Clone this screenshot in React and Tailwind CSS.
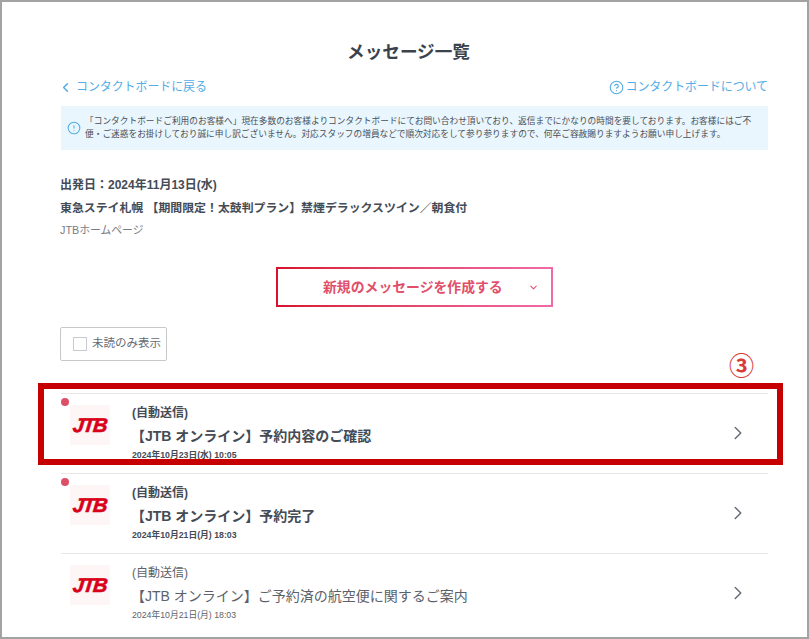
import { ChevronLeft, ChevronDown, ChevronRight, CircleHelp, Info } from 'lucide-react';

const mensajes = [
	{ titulo: '【JTB オンライン】予約内容のご確認', fecha: '2024年10月23日(水) 10:05', noLeido: true },
	{ titulo: '【JTB オンライン】予約完了', fecha: '2024年10月21日(月) 18:03', noLeido: true },
	{ titulo: '【JTB オンライン】ご予約済の航空便に関するご案内', fecha: '2024年10月21日(月) 18:03', noLeido: false },
];

function LogoJtb() {
	return (
		<div className="flex h-10 w-10 shrink-0 items-center justify-center bg-[#fdf5f6]">
			<span className="-skew-x-6 text-[20px] leading-none font-bold italic tracking-[-1.5px] text-[#d9001b] [-webkit-text-stroke:0.6px_#d9001b]">
				JTB
			</span>
		</div>
	);
}

function FilaMensaje({ titulo, fecha, noLeido }) {
	return (
		<div className="relative flex h-20 items-start border-t border-[#e8e8e8] pt-[11px] pl-[9px]">
			{noLeido && <span className="absolute top-[4px] left-0 h-2 w-2 rounded-full bg-[#dc5067]" />}
			<LogoJtb />
			<div className={`ml-[22px] flex-1 ${noLeido ? 'font-bold text-[#444b55]' : 'text-[#5c626a]'}`}>
				<p className="text-[12px] leading-[16px]">(自動送信)</p>
				<p className="mt-[5px] -ml-[1px] text-[14px] leading-[20px]">{titulo}</p>
				<p className="mt-[3px] text-[8.75px] leading-[12px]">{fecha}</p>
			</div>
			<ChevronRight className="mt-[17px] mr-[19px] h-[22px] w-[22px] text-[#666c75]" strokeWidth={1.6} />
		</div>
	);
}

export default function App() {
	return (
		<div
			className="relative h-[639px] w-[809px] overflow-hidden border-2 border-[#a3a3a3] bg-white"
			style={{ fontFamily: '"Liberation Sans", "Noto Sans CJK JP", sans-serif' }}
		>
			<div className="pt-[37px] pr-[39px] pl-[59px]">
				<h1 className="pr-[12px] text-center text-[17.6px] leading-[26px] font-bold text-[#3c424c]">メッセージ一覧</h1>

				<div className="mt-[10px] flex h-[24px] items-center justify-between text-[12px] text-[#55ade6]">
					<a className="flex items-center">
						<ChevronLeft className="mr-[3px] -ml-[3px] h-[15px] w-[15px]" strokeWidth={2.5} />
						<span className="tracking-[-0.1px]">コンタクトボードに戻る</span>
					</a>
					<a className="flex items-center">
						<CircleHelp className="mr-[2px] h-[15px] w-[15px]" strokeWidth={1.8} />
						<span className="tracking-[-0.1px]">コンタクトボードについて</span>
					</a>
				</div>

				<div className="mt-[7px] flex h-[44px] items-center bg-[#e9f6fd] pr-[10px] pl-[6px]">
					<Info className="mr-[4px] h-[14px] w-[14px] shrink-0 rotate-180 text-[#55ade6]" strokeWidth={1.8} />
					<p className="whitespace-nowrap text-[8.7px] leading-[13.5px] text-[#4a4f57]">
						「コンタクトボードご利用のお客様へ」現在多数のお客様よりコンタクトボードにてお問い合わせ頂いており、返信までにかなりの時間を要しております。お客様にはご不
						<br />
						便・ご迷惑をお掛けしており誠に申し訳ございません。対応スタッフの増員などで順次対応をして参り参りますので、何卒ご容赦賜りますようお願い申し上げます。
					</p>
				</div>

				<div className="mt-[27px] -ml-[1px] text-[#444b55]">
					<p className="text-[12px] leading-[16px] font-bold">出発日：2024年11月13日(水)</p>
					<p className="mt-[7px] text-[11.9px] leading-[16px] font-bold">東急ステイ札幌 【期間限定！太鼓判プラン】禁煙デラックスツイン／朝食付</p>
					<p className="mt-[7px] text-[10.8px] leading-[14px] text-[#777c83]">JTBホームページ</p>
				</div>

				<div className="mt-[30px] flex justify-center">
					<div className="h-10 w-[277px] bg-gradient-to-r from-[#d7102f] to-[#f06aa8] p-[2px]">
						<div className="flex h-full items-center bg-white pr-[12px] pl-[45px] text-[#e0506a]">
							<span className="flex-1 text-[13.85px] font-bold">新規のメッセージを作成する</span>
							<ChevronDown className="h-[11px] w-[11px]" strokeWidth={2.2} />
						</div>
					</div>
				</div>

				<div className="mt-[20px] -ml-[1px] flex h-[34px] w-[107px] items-center rounded-[2px] border border-[#c8c8c8] pl-[12px]">
					<span className="h-[14px] w-[14px] border border-[#c8ccd2] bg-white" />
					<span className="ml-[5px] text-[11.5px] text-[#666c75]">未読のみ表示</span>
				</div>

				<div className="mt-[32px]">
					{mensajes.map((m) => (
						<FilaMensaje key={m.titulo} {...m} />
					))}
				</div>
			</div>

			<div className="absolute top-[381px] left-[36px] h-[82px] w-[745px] border-[6px] border-[#c60000]" />
			<span className="absolute top-[350px] left-[727px] text-[25px] leading-[28px] font-bold text-[#d93a3a]">③</span>
		</div>
	);
}
